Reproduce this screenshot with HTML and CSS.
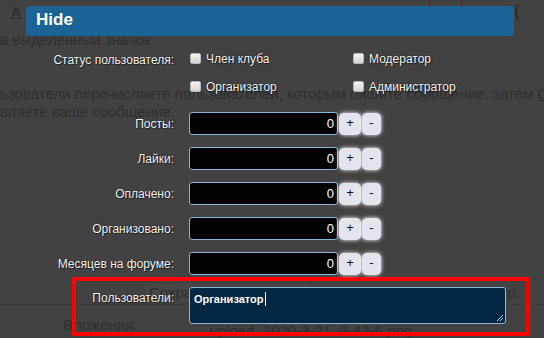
FILE: index.html
```html
<!DOCTYPE html>
<html lang="ru">
<head>
  <meta charset="UTF-8">
  <title>Hide</title>
  <link rel="stylesheet" href="styles.css">
</head>
<body>
  <div class="page">
    <div class="toolbar">
      <span class="tool-a">A</span>
      <span class="tool-mark"></span>
      <span class="tool-round">(</span>
    </div>
    <p class="line">а выделенный значок</p>
    <p class="line line-gap">ьзователи перечисляете пользователей, которым пишите сообщение, затем <u>ОК</u>. Между по</p>
    <p class="line">вляете ваше сообщение.</p>
    <div class="save-row">
      <span class="save-btn">Сохранить изменения</span>
      <span class="preview">Просмотр.</span>
    </div>
    <div class="attach-row">
      <span class="attach-label">Вложения:</span>
      <span class="attach-file">upload_2020-3-21_9-42-6.png</span>
    </div>
  </div>

  <div class="dialog">
    <div class="dialog-title">Hide</div>

    <div class="form">
      <div class="row status-row">
        <label class="row-label">Статус пользователя:</label>
        <div class="checks">
          <label class="check"><span class="box"></span>Член клуба</label>
          <label class="check"><span class="box"></span>Модератор</label>
          <label class="check"><span class="box"></span>Организатор</label>
          <label class="check"><span class="box"></span>Администратор</label>
        </div>
      </div>

      <div class="row num-row">
        <label class="row-label">Посты:</label>
        <div class="num"><span class="num-input">0</span><span class="btn btn-plus">+</span><span class="btn btn-minus">-</span></div>
      </div>
      <div class="row num-row">
        <label class="row-label">Лайки:</label>
        <div class="num"><span class="num-input">0</span><span class="btn btn-plus">+</span><span class="btn btn-minus">-</span></div>
      </div>
      <div class="row num-row">
        <label class="row-label">Оплачено:</label>
        <div class="num"><span class="num-input">0</span><span class="btn btn-plus">+</span><span class="btn btn-minus">-</span></div>
      </div>
      <div class="row num-row">
        <label class="row-label">Организовано:</label>
        <div class="num"><span class="num-input">0</span><span class="btn btn-plus">+</span><span class="btn btn-minus">-</span></div>
      </div>
      <div class="row num-row">
        <label class="row-label">Месяцев на форуме:</label>
        <div class="num"><span class="num-input">0</span><span class="btn btn-plus">+</span><span class="btn btn-minus">-</span></div>
      </div>

      <div class="highlight">
        <div class="row users-row">
          <label class="row-label">Пользователи:</label>
          <div class="users-input">Организатор<span class="caret"></span>
            <svg class="grip" width="9" height="9" viewBox="0 0 9 9">
              <path d="M8 2 L2 8 M8 5 L5 8" stroke="#c8d8e6" stroke-width="1"/>
            </svg>
          </div>
        </div>
      </div>
    </div>
  </div>
</body>
</html>
```

FILE: styles.css
```css
body {
  margin: 0;
  width: 544px;
  height: 338px;
  overflow: hidden;
  position: relative;
  background: #424242;
  font-family: "Liberation Sans", Arial, sans-serif;
}

/* page behind the overlay */
.page {
  width: 544px;
  height: 338px;
  overflow: hidden;
  color: #2e2e2e;
  font-size: 15px;
  line-height: 18px;
  white-space: nowrap;
}

.toolbar {
  height: 31px;
  display: flex;
  align-items: flex-start;
}

.tool-a {
  margin: 3px 0 0 11px;
  font-size: 14px;
  font-weight: bold;
  text-decoration: underline;
}

.tool-mark {
  width: 30px;
  height: 6px;
  margin-left: 408px;
  border: 2px solid #5e2727;
  border-top: none;
}

.tool-round {
  margin: 3px 0 0 51px;
  font-size: 16px;
  font-weight: bold;
}

.line {
  margin: 0;
}

.line-gap {
  margin-top: 36px;
}

.save-row {
  margin-top: 161px;
  height: 22px;
  display: flex;
  align-items: center;
  border-bottom: 1px solid #3a3a3a;
}

.save-btn {
  margin-left: 145px;
  padding: 0 4px;
  background: #474747;
}

.preview {
  margin-left: 140px;
}

.attach-row {
  margin-top: 11px;
  display: flex;
  align-items: flex-end;
}

.attach-label {
  margin-left: 63px;
}

.attach-file {
  margin-left: 72px;
  margin-bottom: -6px;
}

/* overlay dialog */
.dialog {
  position: absolute;
  top: 6px;
  left: 26px;
  width: 488px;
}

.dialog-title {
  height: 30px;
  padding-left: 10px;
  background: #1b6396;
  border-radius: 4px;
  color: #fff;
  font-size: 17px;
  font-weight: bold;
  line-height: 27px;
}

.form {
  color: #f6f6f6;
  font-size: 12px;
  text-shadow: 0 0 1px #000, 1px 1px 1px #222;
}

.row {
  display: grid;
  grid-template-columns: 148px 1fr;
  column-gap: 15px;
}

.row-label {
  text-align: right;
}

.status-row {
  margin-top: 17px;
}

.status-row .row-label {
  line-height: 12px;
  padding-top: 1px;
}

.checks {
  display: grid;
  grid-template-columns: 163px 1fr;
  row-gap: 15px;
  padding-left: 1px;
}

.check {
  display: flex;
  align-items: flex-start;
  line-height: 12px;
}

.check .box {
  width: 11px;
  height: 11px;
  margin-right: 5px;
  border-radius: 2px;
  background: linear-gradient(#f4f4f4, #d4d4d4);
  border: 1px solid #b8b8b8;
  box-sizing: border-box;
}

.check:nth-child(n+3) {
  padding-top: 1px;
}

.num-row {
  margin-top: 12px;
  align-items: center;
}

.status-row + .num-row {
  margin-top: 19px;
}

.num {
  display: flex;
  align-items: center;
}

.num-input {
  width: 149px;
  height: 23px;
  box-sizing: border-box;
  background: #000;
  border: 1px solid #8cb6d6;
  border-radius: 3px;
  color: #fff;
  font-size: 13px;
  line-height: 21px;
  text-align: right;
  padding-right: 3px;
  text-shadow: none;
}

.btn {
  height: 22px;
  border-radius: 5px;
  background: #e4e4ee;
  box-shadow: 0 0 4px #fff;
  color: #111;
  text-shadow: none;
  font-size: 13px;
  line-height: 19px;
  text-align: center;
}

.btn-plus {
  width: 22px;
  margin-left: 1px;
}

.btn-minus {
  width: 19px;
  margin-left: 1px;
}

/* red annotation frame */
.highlight {
  margin: 2px -16px 0 46px;
  height: 59px;
  box-sizing: border-box;
  border: 4px solid #f00;
  padding-top: 6px;
}

.users-row {
  grid-template-columns: 98px 1fr;
}

.users-row .row-label {
  padding-top: 4px;
}

.users-input {
  width: 317px;
  height: 37px;
  box-sizing: border-box;
  position: relative;
  background: #042744;
  border: 1px solid #8cb6d6;
  border-radius: 3px;
  padding: 4px 4px;
  font-size: 11px;
  font-weight: bold;
  line-height: 14px;
  color: #fff;
  text-shadow: none;
}

.caret {
  display: inline-block;
  width: 1px;
  height: 14px;
  margin-left: 1px;
  vertical-align: top;
  background: #fff;
}

.grip {
  position: absolute;
  right: 1px;
  bottom: 1px;
}
```
